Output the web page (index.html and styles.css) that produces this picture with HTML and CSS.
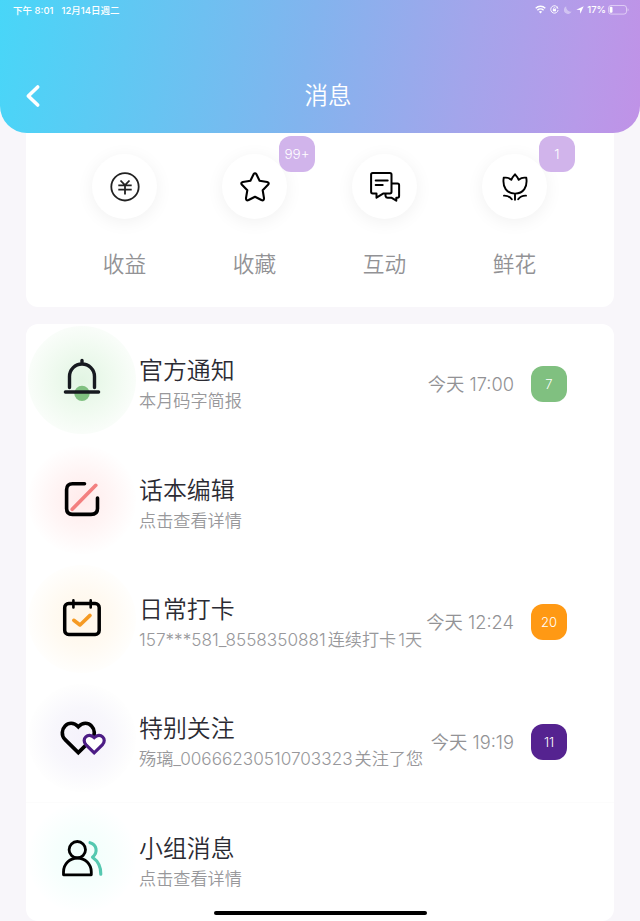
FILE: index.html
```
<!DOCTYPE html>
<html lang="zh-CN">
<head>
    <meta charset="UTF-8">
    <meta name="viewport" content="width=device-width, initial-scale=1.0">
    <title>消息</title>
    <link rel="stylesheet" href="styles.css">
</head>
<body>

    <header class="header">
        <div class="statusbar">
            <div class="status-left"><span>下午 8:01</span><span>12月14日週二</span></div>
            <div class="status-right">
                <svg width="11" height="9" viewBox="0 0 11 9" fill="none" stroke="#fff" stroke-width="1.4"><path d="M.7 3.3a6.8 6.8 0 0 1 9.6 0M2.4 5.2a4.4 4.4 0 0 1 6.2 0"/><path d="M5.5 8.4 3.9 6.8a2.3 2.3 0 0 1 3.2 0z" fill="#fff" stroke="none"/></svg>
                <svg class="lock" width="9" height="9" viewBox="0 0 9 9" fill="none" stroke="#fff" stroke-width=".9"><path d="M6.7 1.5A3.7 3.7 0 1 0 8.1 5"/><path d="M7 .8l1.500 3-2.200-.5z" fill="#fff" stroke="none"/><path d="M2.8 4.1h3.2v2.2H2.8z" fill="#fff" stroke="none"/><path d="M3.500 4.200v-.7a.9.9 0 0 1 1.800 0v.7" stroke-width=".7"/></svg>
                <svg class="moon" width="8" height="8" viewBox="0 0 8 8"><path d="M2.3.3A4 4 0 1 0 7.6 5.5 4.4 4.4 0 0 1 2.3.3z" fill="#fff" opacity=".4"/></svg>
                <svg class="arrow" width="8" height="8" viewBox="0 0 8 8"><path d="M7.700.3.3 3.700l3.600.4.4 3.600z" fill="#fff"/></svg>
                <span>17%</span>
                <svg class="battery" width="21" height="10" viewBox="0 0 21 10"><rect x=".5" y=".5" width="18" height="8.600" rx="2.500" fill="none" stroke="#fff" stroke-opacity=".5"/><rect x="1.700" y="1.800" width="2.800" height="6" rx="1" fill="#fff"/><path d="M19.600 3.200v3.200q1-.4 1-1.600t-1-1.600z" fill="#fff" opacity=".5"/></svg>
            </div>
        </div>
        <div class="navbar">
            <svg class="back" width="16" height="24" viewBox="0 0 16 24" fill="none" stroke="#fff" stroke-width="3.600" stroke-linecap="round" stroke-linejoin="round"><path d="M12.700 3 3.300 12l9.400 9"/></svg>
            <h1>消息</h1>
        </div>
    </header>

    <main>
        <section class="shortcuts">
            <div class="shortcut">
                <div class="circle">
                    <svg width="32" height="32" viewBox="0 0 32 32" fill="none" stroke="#222" stroke-width="1.8"><circle cx="16" cy="15.800" r="13.700"/><path d="M11.500 9.500l4.500 4.700 4.500-4.700M9.300 14.400h13.400M9.300 18.600h13.400M16 14v9.600"/></svg>
                </div>
                <p>收益</p>
            </div>
            <div class="shortcut">
                <div class="circle">
                    <svg width="32" height="32" viewBox="0 0 32 32" fill="none" stroke="#000" stroke-width="2.100" stroke-linejoin="round"><path d="M14.600 3.200Q16 1.300 17.400 3.200L20.600 9.700 28.200 11Q30.700 11.800 29 13.800L23.700 19.300 25 27.200Q25 30.200 22.400 29L16 25.800 9.600 29Q7 30.200 7 27.200L8.300 19.300 3 13.800Q1.300 11.800 3.800 11L11.400 9.700z"/></svg>
                    <span class="badge">99+</span>
                </div>
                <p>收藏</p>
            </div>
            <div class="shortcut">
                <div class="circle">
                    <svg width="32" height="32" viewBox="0 0 32 32" fill="none" stroke="#000" stroke-width="2" stroke-linecap="round" stroke-linejoin="round"><path d="M3.700 2h17.200q1.600 0 1.600 1.600v17.200q0 1.600-1.600 1.600h-6.400l-7 4.300v-4.300H3.700q-1.600 0-1.600-1.600V3.600Q2.100 2 3.700 2z"/><path d="M6.700 9.500h12M6.700 13.900h7M23 12.500h5.500q1.600 0 1.600 1.600v11q0 1.600-1.600 1.600h-1.200v3l-5-3h-3.600q-1.700 0-2.200-1.800v-2"/></svg>
                </div>
                <p>互动</p>
            </div>
            <div class="shortcut">
                <div class="circle">
                    <svg width="32" height="32" viewBox="0 0 32 32" fill="none" stroke="#000" stroke-width="1.900" stroke-linecap="round" stroke-linejoin="round"><path d="M12.300 8.800C13.500 6 14.800 4.600 16 3.300 17.200 4.600 18.500 6 19.700 8.800 22 6.900 24.500 6.200 27.300 6.800 28.700 16 24.500 22.600 16 22.600S3.300 16 4.700 6.800C7.500 6.200 10 6.900 12.300 8.800zM16 22.600v6.200M5 24.600q5-.2 7.800 3.700M27 24.600q-5-.2-7.800 3.700"/></svg>
                    <span class="badge">1</span>
                </div>
                <p>鲜花</p>
            </div>
        </section>

        <section class="list">
            <div class="row">
                <div class="halo green">
                    <svg width="48" height="48" viewBox="0 0 48 48" fill="none" stroke="#171a20" stroke-width="3.400" stroke-linecap="round"><circle cx="24" cy="37.400" r="7.700" fill="#80c080" stroke="none"/><path d="M7.400 36H40.600M11.500 31.500V20.500a12.500 12.500 0 0 1 25 0v11M24 8V4.500"/></svg>
                </div>
                <div class="text">
                    <h2>官方通知</h2>
                    <p>本月码字简报</p>
                </div>
                <span class="time">今天 17:00</span>
                <span class="count bg-green">7</span>
            </div>
            <div class="row">
                <div class="halo red">
                    <svg width="48" height="48" viewBox="0 0 48 48" fill="none" stroke="#000" stroke-width="3.600" stroke-linecap="round"><path d="M26.500 7.800H14.500Q8.600 7.800 8.600 13.700V32.500Q8.600 38.400 14.500 38.400H33Q39.500 38.400 39.500 32.500V22"/><path d="M14.200 33.300 37.800 9.300" stroke="#f38080" stroke-width="3.600"/></svg>
                </div>
                <div class="text">
                    <h2>话本编辑</h2>
                    <p>点击查看详情</p>
                </div>
            </div>
            <div class="row">
                <div class="halo orange">
                    <svg width="48" height="48" viewBox="0 0 48 48" fill="none" stroke="#000" stroke-width="3.500" stroke-linecap="round" stroke-linejoin="round"><rect x="6.700" y="8.500" width="34.500" height="31" rx="4"/><path d="M15.400 5.400v7M32.700 5.400v7" stroke-width="2.600"/><path d="M15.800 25.300l6.200 4.700 10-9.600" stroke="#f59a23" stroke-width="3.600"/></svg>
                </div>
                <div class="text">
                    <h2>日常打卡</h2>
                    <p>157***581_8558350881<span class="gap">连续打卡</span><span class="gap">1</span>天</p>
                </div>
                <span class="time">今天 12:24</span>
                <span class="count bg-orange">20</span>
            </div>
            <div class="row">
                <div class="halo purple">
                    <svg width="48" height="48" viewBox="0 0 48 48" fill="none" stroke="#000" stroke-width="3.600"><path d="M20.300 38.600 6.900 25.400C-1 16.500 10.800 2.800 20.300 12.800 29.800 2.800 41.600 16.500 33.700 25.400z"/><path d="M36.200 38.800 28.100 30.800C22.600 25 30.100 17.800 36.200 23.600 42.300 17.800 49.800 25 44.300 30.800z" fill="#fff" stroke="#4c1c85" stroke-width="3.200"/></svg>
                </div>
                <div class="text">
                    <h2>特别关注</h2>
                    <p>殇璃_00666230510703323<span class="gap">关注了您</span></p>
                </div>
                <span class="time">今天 19:19</span>
                <span class="count bg-purple">11</span>
            </div>
            <div class="row divider">
                <div class="halo teal">
                    <svg width="48" height="48" viewBox="0 0 48 48" fill="none" stroke="#000" stroke-width="2.800" stroke-linejoin="round" stroke-linecap="round"><circle cx="19.300" cy="15.700" r="8.200"/><path d="M5.500 40.800v-2.800a13.900 14 0 0 1 27.800 0v2.800z"/><path d="M32 8.700c6.500 1.600 8.500 9.500 2.500 14.500 5 3.500 8.500 8.500 8.300 17" stroke="#55c8b0" stroke-width="3.100"/></svg>
                </div>
                <div class="text">
                    <h2>小组消息</h2>
                    <p>点击查看详情</p>
                </div>
            </div>
        </section>
    </main>

    <div class="home-bar"></div>

</body>
</html>
```
FILE: styles.css
```
* {
    box-sizing: border-box;
}

body {
    margin: 0;
    height: 921px;
    overflow: hidden;
    position: relative;
    background-color: #f8f6fa;
    font-family: Inter, "Noto Sans CJK SC", sans-serif;
    font-weight: 350;
    color: #2b2b33;
}

h1, h2, p {
    margin: 0;
    font-weight: 350;
}

svg {
    flex-shrink: 0;
}

/* Header */
.header {
    height: 133px;
    background: linear-gradient(98deg, #48d6f8 0%, #60c8f3 20%, #82b4ee 48%, #a3a5eb 72%, #b79ae9 90%, #c092e7 100%);
    border-radius: 0 0 27px 27px;
    color: #fff;
}

.statusbar {
    height: 19px;
    padding: 0 11px 0 13px;
    display: flex;
    justify-content: space-between;
    align-items: center;
    font-size: 9.5px;
    font-weight: 450;
}

.status-left, .status-right {
    display: flex;
    align-items: center;
}

.status-left {
    gap: 8px;
}

.lock { margin-left: 4px; }
.moon { margin-left: 5px; }
.arrow { margin: 0 3px 0 4px; }
.battery { margin-left: 2px; }

.navbar {
    height: 114px;
    padding: 40px 0 0 16px;
    position: relative;
    text-align: center;
}

.navbar h1 {
    font-size: 23.5px;
    line-height: 74px;
}

.back {
    position: absolute;
    left: 25px;
    top: 65px;
}

/* Shortcuts */
.shortcuts {
    height: 174px;
    margin: 0 26px;
    padding: 21px 34px 0 33.5px;
    display: flex;
    background-color: #fff;
    border-radius: 0 0 12px 12px;
}

.shortcut {
    width: 130px;
    display: flex;
    flex-direction: column;
    align-items: center;
}

.circle {
    width: 65px;
    height: 65px;
    display: flex;
    align-items: center;
    justify-content: center;
    position: relative;
    border-radius: 50%;
    background-color: #fff;
    box-shadow: 0 3px 18px rgba(0, 0, 0, 0.06);
}

.shortcut p {
    margin-top: 29px;
    font-size: 21.7px;
    line-height: 32px;
    color: #929295;
}

.badge, .count {
    width: 36px;
    height: 36px;
    border-radius: 12px;
    color: #fff;
    font-size: 13px;
    line-height: 36px;
    text-align: center;
}

.badge {
    position: absolute;
    left: 57px;
    top: -18px;
    background-color: #d1b4eb;
    font-size: 13.5px;
}

/* Message list */
.list {
    margin: 17px 26px 0;
    background-color: #fff;
    border-radius: 12px;
}

.row {
    height: 119.4px;
    padding-right: 47px;
    display: flex;
    align-items: center;
}

.divider {
    border-top: 1px solid #fcfcfc;
}

.halo {
    width: 108px;
    height: 108px;
    margin: 0 3px 7px 2px;
    display: flex;
    flex-shrink: 0;
    align-items: center;
    justify-content: center;
    border-radius: 50%;
}

.green { background: radial-gradient(circle closest-side, #e2f5e3, #effaef 55%, #f9fdf9 98%); }
.red { background: radial-gradient(circle closest-side, #ffebeb, #fff5f5 55%, #fffefe 98%); }
.orange { background: radial-gradient(circle closest-side, #fff6e8, #fffaf2 55%, #fffefc 98%); }
.purple { background: radial-gradient(circle closest-side, #f5f2fb, #f8f7fc 55%, #fefefe 98%); }
.teal { background: radial-gradient(circle closest-side, #f0fffc, #f7fffd 55%, #feffff 98%); }

.text {
    flex: 1;
    padding-top: 3px;
    white-space: nowrap;
}

.text h2 {
    font-size: 23.9px;
    line-height: 32px;
}

.text p {
    font-size: 17.15px;
    line-height: 28px;
    color: #98989b;
}

.gap {
    margin-left: 2px;
    margin-right: 2px;
}

.gap + .gap {
    margin-left: 0;
}

.gap:last-child {
    margin-right: 0;
}

.time {
    margin-bottom: 2px;
    font-size: 18.3px;
    color: #929295;
    white-space: nowrap;
}

.count {
    margin-left: 17px;
}

.bg-green { background-color: #80c080; }
.bg-orange { background-color: #ff9914; }
.bg-purple { background-color: #552390; }

.home-bar {
    position: absolute;
    left: 214px;
    top: 911px;
    width: 213px;
    height: 4px;
    border-radius: 2px;
    background-color: #000;
}
```
